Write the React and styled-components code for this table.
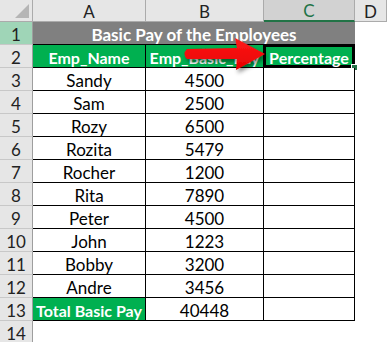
import React from 'react';
import styled, { createGlobalStyle } from 'styled-components';

const GlobalStyle = createGlobalStyle`
    body {
        margin: 0;
        background: #fff;
        font-family: 'Lato', 'Liberation Sans', sans-serif;
    }
`;

const Wrap = styled.div`
    position: relative;
    width: 387px;
    height: 342px;
    overflow: hidden;
`;

const Sheet = styled.div`
    display: grid;
    grid-template-columns: 33px 113px 118px 91px 1fr;
    grid-template-rows: 22px repeat(14, 23px);
`;

const Corner = styled.div`
    position: relative;
    background: #e6e6e6;
    border-right: 1px solid #ababab;
    border-bottom: 1px solid #ababab;
    box-sizing: border-box;
    &::after {
        content: '';
        position: absolute;
        right: 3px;
        bottom: 3px;
        border-style: solid;
        border-width: 0 0 14px 14px;
        border-color: transparent transparent #b5b5b5 transparent;
    }
`;

const ColHead = styled.div`
    display: flex;
    align-items: center;
    justify-content: center;
    box-sizing: border-box;
    padding-top: 1px;
    background: ${p => (p.$selected ? '#d2d2d2' : '#e6e6e6')};
    border-right: 1px solid #ababab;
    border-bottom: ${p => (p.$selected ? '2px solid #217346' : '1px solid #ababab')};
    color: ${p => (p.$selected ? '#217346' : '#222')};
    font-size: 17px;
`;

const RowHead = styled.div`
    display: flex;
    align-items: center;
    justify-content: center;
    box-sizing: border-box;
    padding-top: 2px;
    background: ${p => (p.$highlight ? '#9fd5b7' : '#e6e6e6')};
    border-right: 1px solid #9e9e9e;
    border-bottom: 1px solid #c8c8c8;
    color: #222;
    font-size: 17px;
`;

const Title = styled.div`
    grid-column: span 3;
    display: flex;
    align-items: center;
    justify-content: center;
    box-sizing: border-box;
    padding-top: 2px;
    background: #808080;
    border-bottom: 1px solid #000;
    color: #fff;
    font-weight: 700;
    font-size: 17px;
`;

const fills = {
    head: '#00b050',
    total: '#00b050',
    data: '#fff',
};

const Cell = styled.div`
    position: relative;
    display: flex;
    align-items: center;
    justify-content: center;
    box-sizing: border-box;
    padding-top: 2px;
    background: ${p => fills[p.$kind]};
    border-right: 1px solid #000;
    border-bottom: 1px solid #000;
    color: ${p => (p.$kind === 'data' ? '#000' : '#fff')};
    font-weight: ${p => (p.$kind === 'data' ? 400 : 700)};
    font-size: ${p => (p.$kind === 'data' ? '17px' : '16px')};
    white-space: nowrap;
    overflow: hidden;
`;

const Active = styled(Cell)`
    overflow: visible;
    box-shadow: inset 0 0 0 2px #000;
    &::after {
        content: '';
        position: absolute;
        right: -4px;
        bottom: -4px;
        width: 5px;
        height: 5px;
        background: #217346;
        border: 1px solid #fff;
    }
`;

const Blank = styled.div`
    background: #fff;
`;

const Arrow = styled.svg`
    position: absolute;
    left: 0;
    top: 0;
    pointer-events: none;
`;

const rows = [
    ['Sandy', 4500],
    ['Sam', 2500],
    ['Rozy', 6500],
    ['Rozita', 5479],
    ['Rocher', 1200],
    ['Rita', 7890],
    ['Peter', 4500],
    ['John', 1223],
    ['Bobby', 3200],
    ['Andre', 3456],
];

const total = rows.reduce((s, r) => s + r[1], 0);

const App = () => (
    <Wrap>
        <GlobalStyle />
        <Sheet>
            <Corner />
            <ColHead>A</ColHead>
            <ColHead>B</ColHead>
            <ColHead $selected>C</ColHead>
            <ColHead>D</ColHead>

            <RowHead $highlight>1</RowHead>
            <Title>Basic Pay of the Employees</Title>
            <Blank />

            <RowHead>2</RowHead>
            <Cell $kind="head">Emp_Name</Cell>
            <Cell $kind="head">Emp_Basic_Pay</Cell>
            <Active $kind="head">Percentage</Active>
            <Blank />

            {rows.map(([name, pay], i) => (
                <React.Fragment key={name}>
                    <RowHead>{i + 3}</RowHead>
                    <Cell $kind="data">{name}</Cell>
                    <Cell $kind="data">{pay}</Cell>
                    <Cell $kind="data" />
                    <Blank />
                </React.Fragment>
            ))}

            <RowHead>13</RowHead>
            <Cell $kind="total">Total Basic Pay</Cell>
            <Cell $kind="data">{total}</Cell>
            <Cell $kind="data" />
            <Blank />

            <RowHead>14</RowHead>
        </Sheet>
        <Arrow width="387" height="342">
            <defs>
                <filter id="shadow" x="-20%" y="-40%" width="140%" height="180%">
                    <feDropShadow dx="2" dy="3" stdDeviation="2" floodColor="#000" floodOpacity="0.45" />
                </filter>
                <linearGradient id="red" x1="0" y1="0" x2="0" y2="1">
                    <stop offset="0" stopColor="#ff1a1a" />
                    <stop offset="1" stopColor="#e60000" />
                </linearGradient>
            </defs>
            <path
                d="M187,49 L237,48 L235,38 L265,54 L236,70 L237,59 L187,59 Q182,54 187,49 Z"
                fill="url(#red)"
                filter="url(#shadow)"
            />
        </Arrow>
    </Wrap>
);

export default App;
